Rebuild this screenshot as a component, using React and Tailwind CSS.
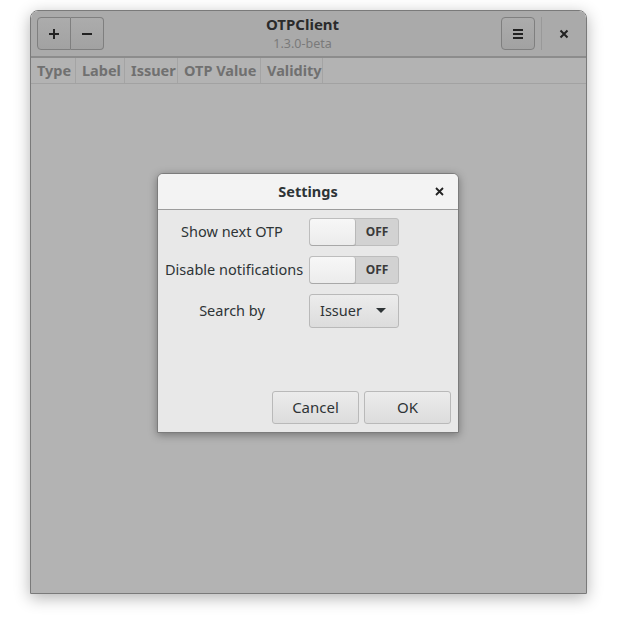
import React from "react";

const font = { fontFamily: '"Noto Sans", "Open Sans", sans-serif' };

const HeaderButton = ({ children, className = "" }) => (
  <div
    className={`h-[33px] flex items-center justify-center bg-gradient-to-b from-[#acacac] to-[#a2a2a2] border border-[#7f7f7f] ${className}`}
  >
    {children}
  </div>
);

const Switch = () => (
  <div className="w-[90px] h-[28px] flex rounded-[3px] border border-[#bdbdbd] bg-[#d2d2d2]">
    <div className="w-[46px] h-full rounded-[3px] bg-gradient-to-b from-[#f7f7f7] to-[#ececec] border-r border-[#b8b8b8] shadow-[0_1px_0_#a8a8a8]" />
    <div className="flex-1 flex items-center justify-center text-[12px] font-bold text-[#3a3a3a]">
      OFF
    </div>
  </div>
);

const DialogButton = ({ children, className = "" }) => (
  <div
    className={`h-[33px] flex items-center justify-center rounded-[3px] border border-[#b9b9b9] bg-gradient-to-b from-[#ececec] to-[#dcdcdc] text-[15px] text-[#2e3436] ${className}`}
  >
    {children}
  </div>
);

const columns = [
  { name: "Type", w: "w-[45px]" },
  { name: "Label", w: "w-[49px]" },
  { name: "Issuer", w: "w-[53px]" },
  { name: "OTP Value", w: "w-[83px]" },
  { name: "Validity", w: "w-[62px]" },
];

export default function App() {
  return (
    <div className="w-[621px] h-[620px] bg-white relative overflow-hidden" style={font}>
      <div className="pt-[10px] pl-[30px]">
        {/* main window, dimmed behind the modal */}
        <div className="w-[557px] h-[584px] flex flex-col rounded-t-[8px] border border-[#7a7a7a] shadow-[0_4px_16px_rgba(0,0,0,0.3)] overflow-hidden">
          <div className="h-[47px] shrink-0 flex items-center pl-[6px] bg-[#aaaaaa] border-b-2 border-[#8c8c8c]">
            <div className="flex">
              <HeaderButton className="w-[34px] rounded-l-[4px]">
                <svg width="12" height="12" viewBox="0 0 12 12">
                  <path d="M6 1v10M1 6h10" stroke="#222" strokeWidth="2" />
                </svg>
              </HeaderButton>
              <HeaderButton className="w-[33px] rounded-r-[4px] border-l-0">
                <svg width="12" height="12" viewBox="0 0 12 12">
                  <path d="M1 6h10" stroke="#222" strokeWidth="2" />
                </svg>
              </HeaderButton>
            </div>
            <div className="flex-1 flex flex-col items-center leading-none">
              <div className="text-[15px] font-bold text-[#2b2b2b] mt-[1px]">OTPClient</div>
              <div className="text-[12.5px] text-[#7a7a7a] mt-[6px]">1.3.0-beta</div>
            </div>
            <HeaderButton className="w-[34px] rounded-[4px]">
              <svg width="12" height="10" viewBox="0 0 12 10">
                <path d="M1 1h10M1 5h10M1 9h10" stroke="#222" strokeWidth="2" />
              </svg>
            </HeaderButton>
            <div className="w-px h-[33px] bg-[#999999] ml-[6px]" />
            <div className="w-[44px] flex items-center justify-center">
              <svg width="10" height="10" viewBox="0 0 10 10">
                <path d="M1.5 1.5l7 7M8.5 1.5l-7 7" stroke="#222" strokeWidth="2" />
              </svg>
            </div>
          </div>
          <div className="flex-1 bg-[#b3b3b3]">
            <div className="h-[26px] flex border-b border-[#a2a2a2]">
              {columns.map((c) => (
                <div
                  key={c.name}
                  className={`${c.w} shrink-0 border-r border-[#a4a4a4] flex items-center pl-[6px] text-[14.5px] font-bold text-[#707070] whitespace-nowrap`}
                >
                  {c.name}
                </div>
              ))}
            </div>
          </div>
        </div>
      </div>

      {/* modal settings dialog */}
      <div className="absolute left-[157px] top-[173px] w-[302px] h-[260px] flex flex-col rounded-t-[6px] border border-[#7c7c7c] bg-[#e8e8e8] shadow-[0_2px_8px_rgba(0,0,0,0.35)] overflow-hidden">
        <div className="h-[36px] shrink-0 flex items-center bg-[#f3f3f3] border-b border-[#9c9c9c] relative">
          <div className="flex-1 text-center text-[14.5px] font-bold text-[#2e3436]">Settings</div>
          <div className="absolute right-[14px] top-0 h-full flex items-center">
            <svg width="9" height="9" viewBox="0 0 9 9">
              <path d="M1 1l7 7M8 1l-7 7" stroke="#222" strokeWidth="1.8" />
            </svg>
          </div>
        </div>
        <div className="flex-1 flex flex-col px-[7px]">
          <div className="grid grid-cols-[134px_90px] gap-x-[10px] gap-y-[10px] items-center pt-[8px] text-[14.5px] text-[#2e3436]">
            <div className="text-center whitespace-nowrap">Show next OTP</div>
            <Switch />
            <div className="text-center whitespace-nowrap">Disable notifications</div>
            <Switch />
            <div className="text-center whitespace-nowrap">Search by</div>
            <div className="h-[34px] flex items-center justify-between pl-[10px] pr-[12px] rounded-[3px] border border-[#b9b9b9] bg-gradient-to-b from-[#ececec] to-[#dcdcdc]">
              <span>Issuer</span>
              <svg width="10" height="6" viewBox="0 0 10 6">
                <path d="M0 0h10L5 5z" fill="#2e3436" />
              </svg>
            </div>
          </div>
          <div className="flex-1" />
          <div className="flex justify-end gap-[5px] pb-[8px]">
            <DialogButton className="w-[87px]">Cancel</DialogButton>
            <DialogButton className="w-[87px]">OK</DialogButton>
          </div>
        </div>
      </div>
    </div>
  );
}
